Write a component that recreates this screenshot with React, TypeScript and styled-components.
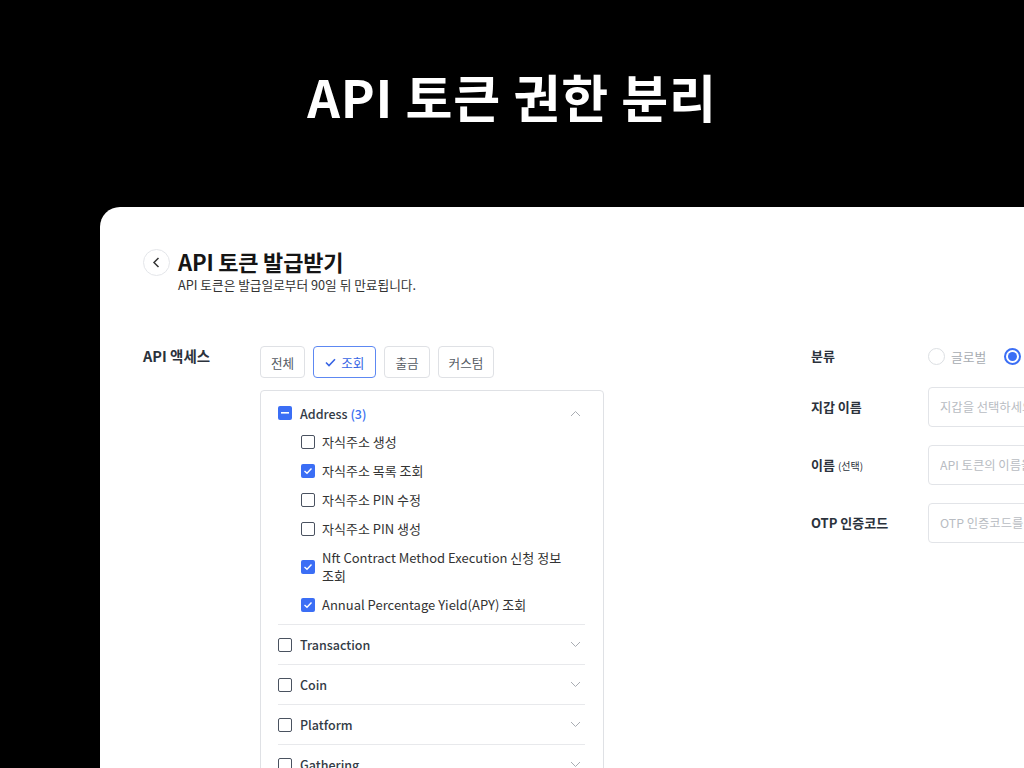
import React from 'react';
import styled, { createGlobalStyle } from 'styled-components';

const GlobalStyle = createGlobalStyle`
  html, body {
    margin: 0;
    padding: 0;
    background: #000;
    height: 768px;
    overflow: hidden;
  }
  body {
    font-family: "Noto Sans CJK KR", "Noto Sans", sans-serif;
    color: #222;
  }
`;

const Page = styled.div`
  width: 1024px;
  height: 768px;
  overflow: hidden;
  padding-top: 66px;
  box-sizing: border-box;
`;

const Headline = styled.h1`
  margin: 0;
  text-align: center;
  color: #fff;
  font-size: 51px;
  line-height: 60px;
  font-weight: 700;
  letter-spacing: 0.8px;
`;

const Card = styled.div`
  margin: 81px 0 0 100px;
  width: 1100px;
  height: 600px;
  background: #fff;
  border-radius: 20px 0 0 0;
  padding: 39px 0 0 43px;
  box-sizing: border-box;
`;

const Header = styled.div`
  display: flex;
  align-items: flex-start;
  gap: 8px;
`;

const BackButton = styled.div`
  width: 27px;
  height: 27px;
  margin-top: 3px;
  border-radius: 50%;
  border: 1px solid #e4e6ea;
  display: flex;
  align-items: center;
  justify-content: center;
  box-sizing: border-box;
`;

const TitleBlock = styled.div`
  display: flex;
  flex-direction: column;
`;

const Title = styled.div`
  font-size: 22px;
  line-height: 30px;
  font-weight: 700;
  color: #151515;
  letter-spacing: -0.2px;
`;

const Subtitle = styled.div`
  font-size: 12.7px;
  line-height: 18px;
  color: #333;
`;

const Body = styled.div`
  display: flex;
  gap: 207px;
  margin-top: 52px;
`;

const Section = styled.div`
  display: grid;
  grid-template-columns: 117px 1fr;
  align-items: start;
`;

const FieldLabel = styled.div<{ $large?: boolean }>`
  font-size: ${({ $large }) => ($large ? '14.5px' : '13px')};
  line-height: 20px;
  font-weight: 700;
  color: #2b323c;
`;

const SmallNote = styled.span`
  font-size: 10px;
  font-weight: 400;
`;

const AccessColumn = styled.div`
  display: flex;
  flex-direction: column;
  gap: 12px;
  width: 344px;
`;

const Tabs = styled.div`
  display: flex;
  gap: 8px;
`;

const Tab = styled.div<{ $active?: boolean }>`
  height: 32px;
  padding: 0 ${({ $active }) => ($active ? '11px' : '10px')};
  display: flex;
  align-items: center;
  gap: 5px;
  border: 1px solid ${({ $active }) => ($active ? '#5d88f2' : '#dfe1e5')};
  border-radius: 4px;
  font-size: 12.6px;
  color: ${({ $active }) => ($active ? '#3764e4' : '#555b63')};
  box-sizing: border-box;
`;

const Panel = styled.div`
  border: 1px solid #dfe1e5;
  border-radius: 4px;
  padding: 11px 18px 0 17px;
  height: 400px;
  box-sizing: border-box;
`;

const GroupHead = styled.div`
  display: flex;
  align-items: center;
  height: 22px;
  gap: 8px;
`;

const GroupRow = styled.div`
  display: flex;
  align-items: center;
  height: 39px;
  gap: 8px;
  border-top: 1px solid #e8e9ec;
`;

const GroupName = styled.div`
  flex: 1;
  font-size: 12.5px;
  color: #333b46;
  font-weight: 500;
`;

const Count = styled.span`
  color: #3a6ff0;
`;

const Children = styled.div`
  padding: 3px 0 5px 23px;
`;

const ChildRow = styled.div`
  display: flex;
  align-items: center;
  gap: 7px;
  padding: 5.5px 0;
`;

const ChildText = styled.div`
  font-size: 13px;
  line-height: 18px;
  color: #333;
  width: 250px;
  word-break: keep-all;
`;

const Box = styled.div<{ $checked?: boolean }>`
  width: 14px;
  height: 14px;
  flex: none;
  border-radius: 2px;
  box-sizing: border-box;
  border: ${({ $checked }) => ($checked ? 'none' : '1.5px solid #4a5260')};
  background: ${({ $checked }) => ($checked ? '#3b6ef5' : '#fff')};
  display: flex;
  align-items: center;
  justify-content: center;
`;

const FormColumn = styled.div`
  display: flex;
  flex-direction: column;
`;

const RadioRow = styled.div`
  display: flex;
  align-items: center;
  height: 20px;
  margin-bottom: 21px;
`;

const RadioGroup = styled.div`
  display: flex;
  align-items: center;
  height: 20px;
`;

const Radio = styled.div<{ $on?: boolean }>`
  width: 17px;
  height: 17px;
  border-radius: 50%;
  box-sizing: border-box;
  border: ${({ $on }) => ($on ? '2px solid #3b6ef5' : '1px solid #dcdfe3')};
  display: flex;
  align-items: center;
  justify-content: center;
  &::after {
    content: '';
    display: ${({ $on }) => ($on ? 'block' : 'none')};
    width: 9px;
    height: 9px;
    border-radius: 50%;
    background: #3b6ef5;
  }
`;

const RadioLabel = styled.span`
  font-size: 12.8px;
  color: #a7abb1;
  margin: 0 18px 0 6px;
`;

const InputRow = styled.div`
  display: grid;
  grid-template-columns: 117px 1fr;
  align-items: center;
  margin-bottom: 18px;
`;

const Input = styled.input`
  width: 300px;
  height: 40px;
  box-sizing: border-box;
  border: 1px solid #e2e4e8;
  border-radius: 4px;
  padding: 0 11px;
  font-family: inherit;
  font-size: 12.3px;
  outline: none;
  &::placeholder {
    color: #b8bcc2;
  }
`;

const Chevron = ({ up }: { up?: boolean }) => (
  <svg width="11" height="7" viewBox="0 0 11 7" style={{ marginRight: 4 }}>
    <polyline
      points={up ? '1,6 5.5,1.5 10,6' : '1,1 5.5,5.5 10,1'}
      fill="none"
      stroke="#a9adb3"
      strokeWidth="1"
    />
  </svg>
);

const Check = () => (
  <svg width="10" height="8" viewBox="0 0 10 8">
    <polyline points="1.5,4 4,6.3 8.5,1.5" fill="none" stroke="#fff" strokeWidth="1.4" />
  </svg>
);

const children = [
  { label: '자식주소 생성', checked: false },
  { label: '자식주소 목록 조회', checked: true },
  { label: '자식주소 PIN 수정', checked: false },
  { label: '자식주소 PIN 생성', checked: false },
  { label: 'Nft Contract Method Execution 신청 정보 조회', checked: true },
  { label: 'Annual Percentage Yield(APY) 조회', checked: true },
];

const groups = ['Transaction', 'Coin', 'Platform', 'Gathering'];

export default function App() {
  return (
    <Page>
      <GlobalStyle />
      <Headline>API 토큰 권한 분리</Headline>
      <Card>
        <Header>
          <BackButton>
            <svg width="13" height="13" viewBox="0 0 13 13">
              <polyline points="8.5,2 4,6.5 8.5,11" fill="none" stroke="#333" strokeWidth="1.5" />
            </svg>
          </BackButton>
          <TitleBlock>
            <Title>API 토큰 발급받기</Title>
            <Subtitle>API 토큰은 발급일로부터 90일 뒤 만료됩니다.</Subtitle>
          </TitleBlock>
        </Header>
        <Body>
          <Section>
            <FieldLabel $large>API 액세스</FieldLabel>
            <AccessColumn>
              <Tabs>
                <Tab>전체</Tab>
                <Tab $active>
                  <svg width="11" height="9" viewBox="0 0 11 9">
                    <polyline points="1,4.5 4,7.5 10,1.2" fill="none" stroke="#3764e4" strokeWidth="1.6" />
                  </svg>
                  조회
                </Tab>
                <Tab>출금</Tab>
                <Tab>커스텀</Tab>
              </Tabs>
              <Panel>
                <GroupHead>
                  <Box $checked>
                    <svg width="8" height="2" viewBox="0 0 8 2">
                      <rect width="8" height="1.6" fill="#fff" />
                    </svg>
                  </Box>
                  <GroupName>
                    Address <Count>(3)</Count>
                  </GroupName>
                  <Chevron up />
                </GroupHead>
                <Children>
                  {children.map((c) => (
                    <ChildRow key={c.label}>
                      <Box $checked={c.checked}>{c.checked && <Check />}</Box>
                      <ChildText>{c.label}</ChildText>
                    </ChildRow>
                  ))}
                </Children>
                {groups.map((g) => (
                  <GroupRow key={g}>
                    <Box />
                    <GroupName>{g}</GroupName>
                    <Chevron />
                  </GroupRow>
                ))}
              </Panel>
            </AccessColumn>
          </Section>
          <FormColumn>
            <RadioRow>
              <FieldLabel style={{ width: 117 }}>분류</FieldLabel>
              <RadioGroup>
                <Radio />
                <RadioLabel>글로벌</RadioLabel>
                <Radio $on />
              </RadioGroup>
            </RadioRow>
            <InputRow>
              <FieldLabel>지갑 이름</FieldLabel>
              <Input placeholder="지갑을 선택하세요" />
            </InputRow>
            <InputRow>
              <FieldLabel>
                이름 <SmallNote>(선택)</SmallNote>
              </FieldLabel>
              <Input placeholder="API 토큰의 이름을 입력하세요" />
            </InputRow>
            <InputRow>
              <FieldLabel>OTP 인증코드</FieldLabel>
              <Input placeholder="OTP 인증코드를 입력하세요" />
            </InputRow>
          </FormColumn>
        </Body>
      </Card>
    </Page>
  );
}
